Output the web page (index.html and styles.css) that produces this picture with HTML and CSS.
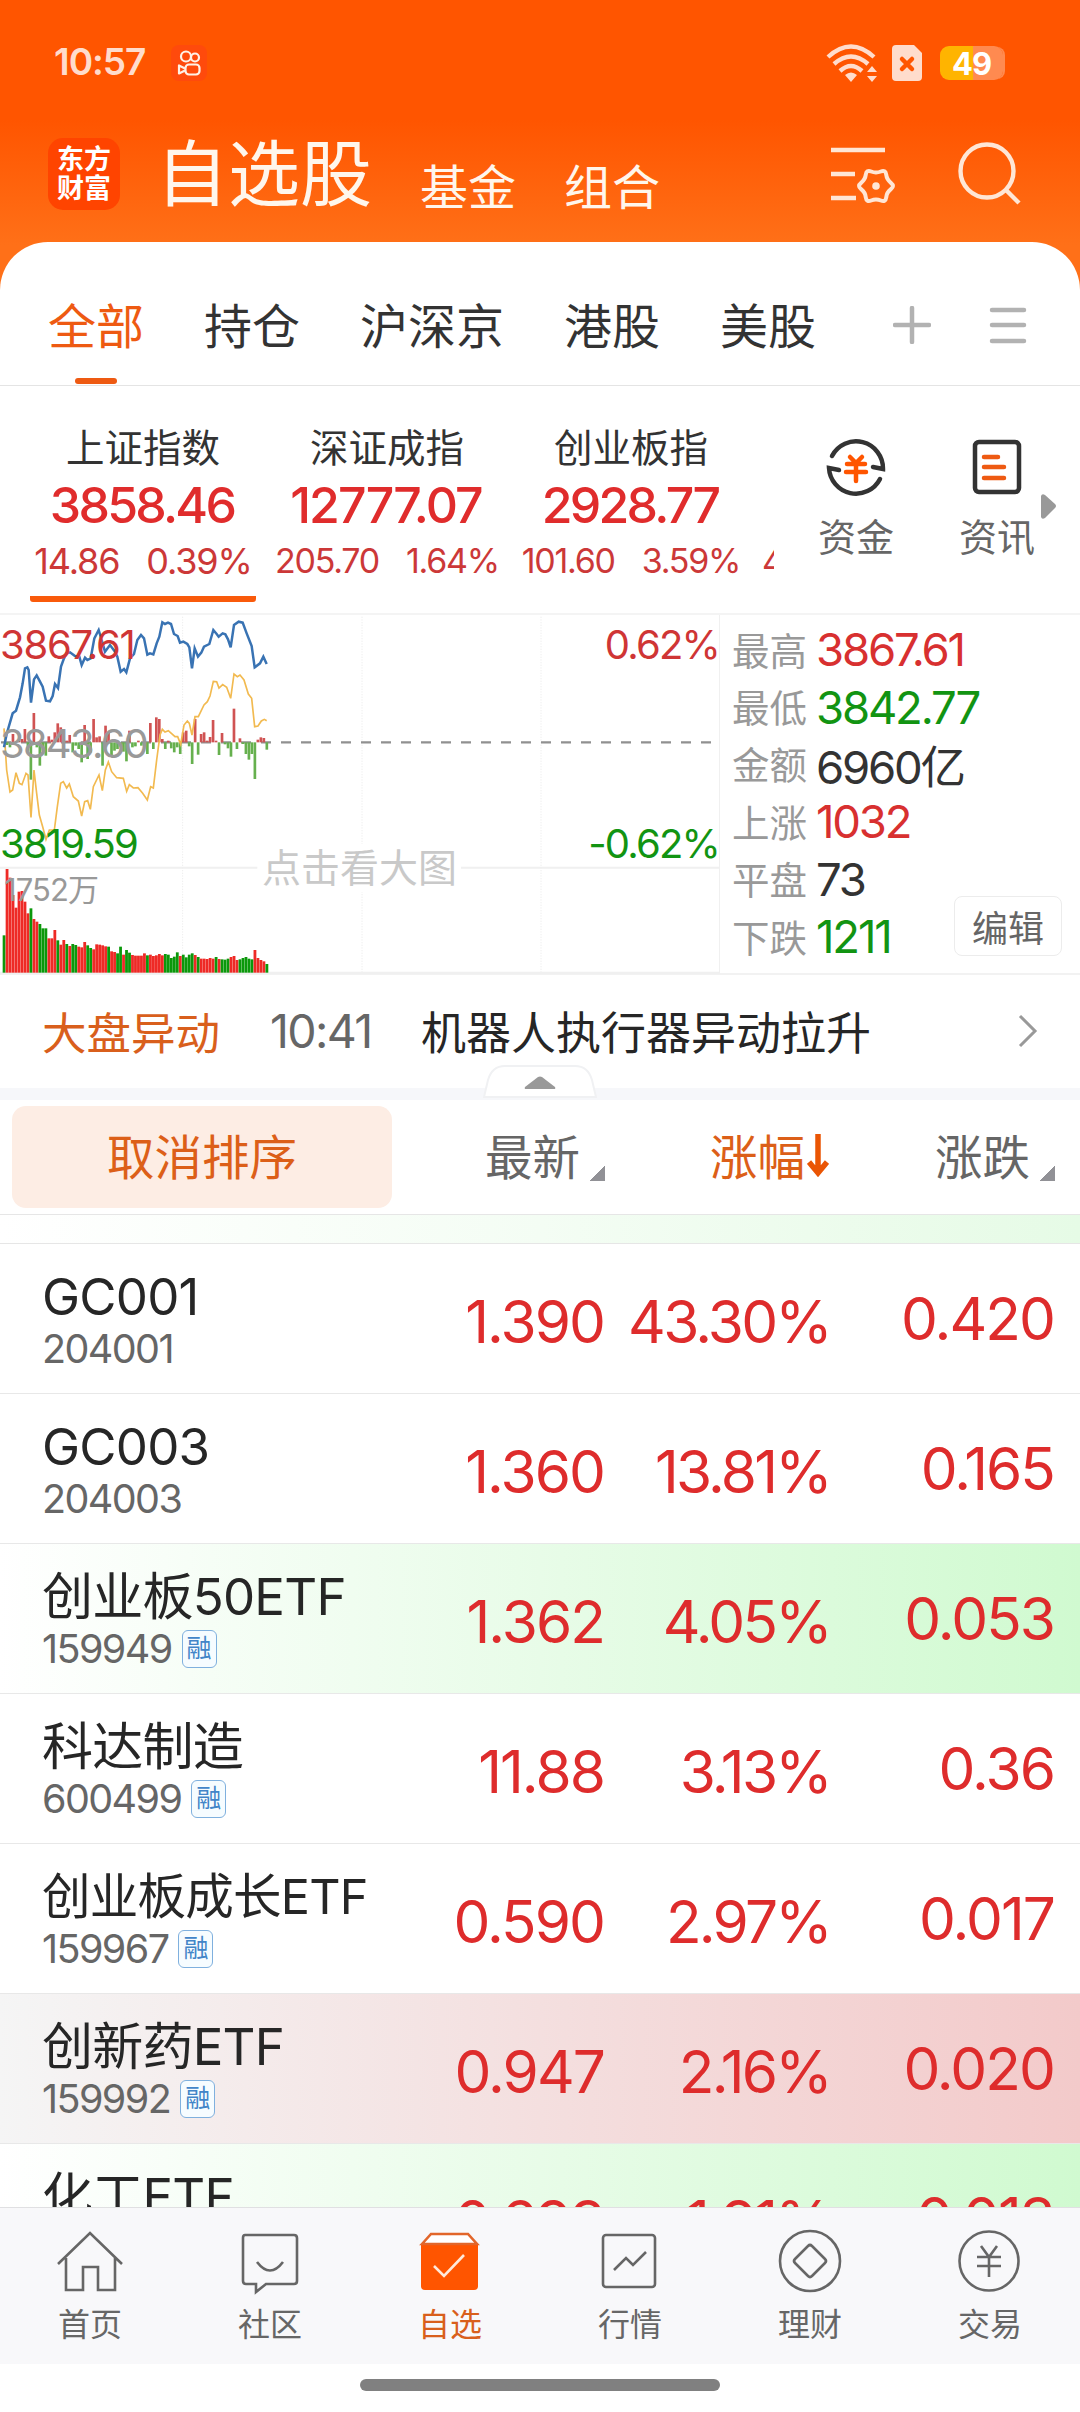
FILE: index.html
```html
<!DOCTYPE html>
<html lang="zh-CN">
<head>
    <meta charset="UTF-8">
    <meta name="viewport" content="width=device-width, initial-scale=1.0">
    <title>自选股</title>
    <link rel="stylesheet" href="styles.css">
</head>
<body>

<div class="header">
    <!-- Status bar -->
    <div class="status">
        <span class="time">10:57</span>
        <svg class="app-dot" viewBox="0 0 36 36">
            <rect width="36" height="36" rx="8" fill="#ff4a0c"/>
            <g fill="none" stroke="#fff1e6" stroke-width="2.2">
                <circle cx="15" cy="11.5" r="5"/><circle cx="24" cy="12.5" r="4"/>
                <rect x="14.5" y="19.5" width="14" height="10" rx="3.5"/>
                <path d="M14 23.5L8 20.5v8l6-3" stroke-linejoin="round"/>
            </g>
        </svg>
        <div class="status-right">
            <svg width="52" height="38" viewBox="0 0 52 38">
                <g fill="none" stroke="#ffdccc" stroke-width="4.4">
                    <path d="M2 13Q25-8 48 13"/><path d="M8 20Q25 5 42 20"/><path d="M14 27Q25 17 36 27"/>
                </g>
                <path d="M19 31q6-5 12 0l-6 7zM41 28l5-6 5 6zM41 32l5 6 5-6z" fill="#ffdccc"/>
            </svg>
            <svg class="sim" width="30" height="36" viewBox="0 0 30 36">
                <path d="M4 0h18l8 8v24q0 4-4 4H4q-4 0-4-4V4q0-4 4-4z" fill="#ffdccc"/>
                <path d="M10 14l10 10M20 14L10 24" stroke="#ff5500" stroke-width="4.5" stroke-linecap="round"/>
            </svg>
            <div class="battery">49</div>
        </div>
    </div>

    <!-- Title bar -->
    <div class="titlebar">
        <div class="logo">东方<br>财富</div>
        <div class="titles">
            <span class="title">自选股</span>
            <span class="subtitle">基金</span>
            <span class="subtitle">组合</span>
        </div>
        <svg class="list-icon" viewBox="0 0 64 60" fill="none" stroke="#ffe6d5" stroke-width="4.5">
            <path d="M0 4h54M0 28h24M0 52h25"/>
            <path d="M59.9 43.2Q55.8 46.3 55.2 51.4Q54.5 56.5 49.8 54.5Q45 52.5 40.2 54.5Q35.5 56.5 34.8 51.4Q34.2 46.3 30.1 43.2Q26 40 30.1 36.8Q34.2 33.7 34.8 28.6Q35.5 23.5 40.2 25.5Q45 27.5 49.8 25.5Q54.5 23.5 55.2 28.6Q55.8 33.7 59.9 36.8Q64 40 59.9 43.2z" stroke-width="4"/>
            <circle cx="45" cy="40" r="3.8" fill="#ffe6d5" stroke="none"/>
        </svg>
        <svg class="search-icon" viewBox="0 0 64 64" fill="none" stroke="#ffe6d5" stroke-width="4.4">
            <circle cx="29" cy="30" r="26.5"/><path d="M48 49L61 62"/>
        </svg>
    </div>
</div>

<div class="panel">
    <!-- Group tabs -->
    <div class="tabs">
        <span class="tab active">全部</span>
        <span class="tab">持仓</span>
        <span class="tab">沪深京</span>
        <span class="tab">港股</span>
        <span class="tab">美股</span>
        <svg class="plus" viewBox="0 0 38 38"><path d="M19 2v34M2 19h34"/></svg>
        <svg class="menu" viewBox="0 0 38 38"><path d="M3 4h32M3 19h32M3 35h32"/></svg>
    </div>

    <!-- Index cards -->
    <div class="indices">
        <div class="index-list">
            <div class="index selected">
                <div class="index-name">上证指数</div>
                <div class="index-value">3858.46</div>
                <div class="index-sub big"><span>14.86</span><span>0.39%</span></div>
            </div>
            <div class="index">
                <div class="index-name">深证成指</div>
                <div class="index-value wide">12777.07</div>
                <div class="index-sub"><span>205.70</span><span>1.64%</span></div>
            </div>
            <div class="index">
                <div class="index-name">创业板指</div>
                <div class="index-value">2928.77</div>
                <div class="index-sub"><span>101.60</span><span>3.59%</span></div>
            </div>
            <div class="index next">
                <div class="index-sub"><span>4</span></div>
            </div>
        </div>
        <div class="action">
            <svg width="60" height="62" viewBox="0 0 60 62" fill="none" stroke="#333" stroke-width="4.5" stroke-linecap="round">
                <path d="M6 20A27 27 0 0 1 57 33L47 31"/>
                <path d="M54 43A27 27 0 0 1 3 32L13 34"/>
                <path d="M24 21l6 6 6-6M21 28h18M20 36h20M30 27v18" stroke="#ff5500"/>
            </svg>
            <span>资金</span>
        </div>
        <div class="action news">
            <svg width="60" height="62" viewBox="0 0 60 62" fill="none" stroke="#333" stroke-width="4.5" stroke-linecap="round">
                <rect x="8" y="6" width="44" height="50" rx="4"/>
                <path d="M17 21h14M17 31h20M17 42h20" stroke="#ee5a12"/>
            </svg>
            <span>资讯</span>
        </div>
        <svg class="more-arrow" viewBox="0 0 15 25"><path d="M0 2q1-3 4-1l10 9q2 2 0 4L4 24q-3 2-4-1z" fill="#999"/></svg>
    </div>

    <!-- Intraday chart -->
    <div class="market">
        <div class="chart">
            <svg id="chart" viewBox="0 15 2160 1077"></svg>
            <span class="label high">3867.61</span>
            <span class="label mid">3843.60</span>
            <span class="label low">3819.59</span>
            <span class="label volume">1752万</span>
            <span class="label pct-up">0.62%</span>
            <span class="label pct-down">-0.62%</span>
            <span class="hint">点击看大图</span>
        </div>
        <div class="stats">
            <div class="stat"><label>最高</label><span class="red">3867.61</span></div>
            <div class="stat"><label>最低</label><span class="green">3842.77</span></div>
            <div class="stat"><label>金额</label><span>6960亿</span></div>
            <div class="stat"><label>上涨</label><span class="red">1032</span></div>
            <div class="stat"><label>平盘</label><span>73</span></div>
            <div class="stat"><label>下跌</label><span class="green">1211</span></div>
            <button class="edit">编辑</button>
        </div>
    </div>

    <!-- News ticker -->
    <div class="ticker">
        <span class="ticker-tag">大盘异动</span>
        <span class="ticker-time">10:41</span>
        <span class="ticker-text">机器人执行器异动拉升</span>
        <svg class="chevron" viewBox="0 0 20 36"><path d="M2 3l15 15L2 33" fill="none" stroke="#999" stroke-width="3"/></svg>
    </div>
    <div class="divider">
        <svg class="collapse" viewBox="0 0 114 34">
            <path d="M1 32L5 15Q9 1 22 1h70q13 0 17 14l4 17z" fill="#fff" stroke="#f0f1f3" stroke-width="2"/>
            <path d="M42 22l13-10q2-1 4 0l13 10q1 2-1 2H43q-2 0-1-2z" fill="#999"/>
        </svg>
    </div>

    <!-- Table header -->
    <div class="thead">
        <button class="cancel-sort">取消排序</button>
        <div class="th">最新<i class="corner"></i></div>
        <div class="th sorted">涨幅<svg width="22" height="44" viewBox="0 0 22 44"><path d="M11 0v38M2 28l9 11 9-11" fill="none" stroke="#ea5504" stroke-width="5.5"/></svg></div>
        <div class="th">涨跌<i class="corner"></i></div>
    </div>

    <!-- Stock list -->
    <div class="list">
        <div class="sliver"></div>
        <div class="row">
            <div class="stock"><div class="name">GC001</div><div class="code">204001</div></div>
            <div class="num">1.390</div><div class="num pct">43.30%</div><div class="num last">0.420</div>
        </div>
        <div class="row">
            <div class="stock"><div class="name">GC003</div><div class="code">204003</div></div>
            <div class="num">1.360</div><div class="num pct">13.81%</div><div class="num last">0.165</div>
        </div>
        <div class="row falling">
            <div class="stock"><div class="name">创业板50ETF</div><div class="code">159949<b class="tag">融</b></div></div>
            <div class="num">1.362</div><div class="num pct">4.05%</div><div class="num last">0.053</div>
        </div>
        <div class="row">
            <div class="stock"><div class="name">科达制造</div><div class="code">600499<b class="tag">融</b></div></div>
            <div class="num">11.88</div><div class="num pct">3.13%</div><div class="num last">0.36</div>
        </div>
        <div class="row">
            <div class="stock"><div class="name long">创业板成长ETF</div><div class="code">159967<b class="tag">融</b></div></div>
            <div class="num">0.590</div><div class="num pct">2.97%</div><div class="num last">0.017</div>
        </div>
        <div class="row rising">
            <div class="stock"><div class="name">创新药ETF</div><div class="code">159992<b class="tag">融</b></div></div>
            <div class="num">0.947</div><div class="num pct">2.16%</div><div class="num last">0.020</div>
        </div>
        <div class="row falling">
            <div class="stock"><div class="name">化工ETF</div><div class="code">159870<b class="tag">融</b></div></div>
            <div class="num">0.693</div><div class="num pct">1.91%</div><div class="num last">0.013</div>
        </div>
    </div>
</div>

<!-- Bottom navigation -->
<div class="nav">
    <div class="nav-item">
        <svg viewBox="0 0 66 66"><path d="M1 35L33 4l32 31M9 29v32h17V38h15v23h17V29"/></svg>
        <span>首页</span>
    </div>
    <div class="nav-item">
        <svg viewBox="0 0 66 66"><path d="M8 6h49q3 0 3 3v43q0 3-3 3H29l-10 8v-8H9q-3 0-3-3V9q0-3 2-3z"/><path d="M20 33q13 17 26 0"/></svg>
        <span>社区</span>
    </div>
    <div class="nav-item current">
        <svg viewBox="0 0 66 66">
            <path d="M4 15v42q0 4 4 4h49q4 0 4-4V15z" fill="#ff5500" stroke="none"/>
            <path d="M5 15l9-10h37l9 10z" fill="#fff" stroke="#e2662a"/>
            <path d="M17 37l10 10 20-21" stroke="#ffe9da"/>
        </svg>
        <span>自选</span>
    </div>
    <div class="nav-item">
        <svg viewBox="0 0 66 66"><rect x="6" y="6" width="52" height="52" rx="3"/><path d="M17 41l12-12 7 7 13-13"/></svg>
        <span>行情</span>
    </div>
    <div class="nav-item">
        <svg viewBox="0 0 66 66"><circle cx="33" cy="32" r="30"/><path d="M31 17q2-2 4 0l13 13q2 2 0 4L35 47q-2 2-4 0L18 34q-2-2 0-4z"/></svg>
        <span>理财</span>
    </div>
    <div class="nav-item">
        <svg viewBox="0 0 66 66"><circle cx="32" cy="32" r="29.5"/><path d="M24 17l8 11 8-11M20 28h24M20 37h24M32 28v20"/></svg>
        <span>交易</span>
    </div>
</div>
<div class="gesture"><div class="gesture-bar"></div></div>

<script src="chart.js"></script>
</body>
</html>
```

FILE: styles.css
```css
* {
    box-sizing: border-box;
}

body {
    margin: 0;
    width: 1080px;
    height: 2412px;
    overflow: hidden;
    display: flex;
    flex-direction: column;
    background-color: #fff;
    font-family: Inter, "Noto Sans CJK SC", sans-serif;
    font-weight: 400;
    color: #333;
}

svg {
    display: block;
    flex: none;
}

/* Orange header */
.header {
    height: 290px;
    flex: none;
    background: linear-gradient(#ff5500 120px, #ff7018 245px);
}

.status {
    display: flex;
    align-items: center;
    height: 125px;
    padding: 0 74px 0 54px;
}

.time {
    width: 117px;
    font-size: 37px;
    font-weight: 600;
    letter-spacing: -1px;
    line-height: 40px;
    padding-bottom: 2px;
    color: #ffdccc;
}

.app-dot {
    width: 36px;
    height: 36px;
}

.status-right {
    display: flex;
    align-items: center;
    margin-left: auto;
}

.sim {
    margin: 0 18px 0 14px;
}

.battery {
    width: 63px;
    height: 34px;
    margin-right: 3px;
    border-radius: 9px;
    background: linear-gradient(90deg, #ffb400 52%, #ff8a50 52%);
    box-shadow: 3px 0 0 -1px #ff8a50;
    color: #fff;
    font-size: 31px;
    font-weight: 700;
    letter-spacing: -1px;
    line-height: 35px;
    text-align: center;
}

.titlebar {
    display: flex;
    height: 116px;
    padding: 13px 58px 0 48px;
}

.logo {
    width: 72px;
    height: 72px;
    padding-top: 7px;
    border-radius: 15px;
    background-color: #ff4400;
    color: #fff;
    font-size: 27px;
    font-weight: 700;
    line-height: 29px;
    text-align: center;
}

.titles {
    display: flex;
    margin-left: 36px;
    color: #fff6ec;
    line-height: 72px;
}

.title {
    font-size: 72px;
    margin-right: 48px;
}

.subtitle {
    padding-top: 14px;
    font-size: 48px;
    margin-right: 48px;
}

.list-icon {
    width: 64px;
    height: 60px;
    margin: 8px 0 0 auto;
}

.search-icon {
    width: 64px;
    height: 64px;
    margin: 3px 0 0 63px;
}

/* White panel */
.panel {
    position: relative;
    display: flex;
    flex-direction: column;
    flex: 1;
    min-height: 0;
    margin-top: -48px;
    border-radius: 48px 48px 0 0;
    background-color: #fff;
}

.tabs {
    display: flex;
    align-items: center;
    height: 144px;
    flex: none;
    padding: 27px 53px 0 48px;
    border-bottom: 1px solid #e4e4e4;
}

.tab {
    position: relative;
    margin-right: 60px;
    font-size: 48px;
    line-height: 60px;
}

.tab.active {
    color: #ee5a12;
}

.tab.active::after {
    content: "";
    position: absolute;
    left: 27px;
    bottom: -27px;
    width: 42px;
    height: 6px;
    border-radius: 3px;
    background-color: #ee5a12;
}

.plus,
.menu {
    width: 38px;
    height: 38px;
    margin-bottom: 4px;
    fill: none;
    stroke: #b2b2b2;
    stroke-width: 4.5;
    stroke-linecap: round;
}

.plus {
    margin-left: 17px;
}

.menu {
    margin-left: auto;
}

/* Index cards */
.indices {
    position: relative;
    display: flex;
    height: 229px;
    flex: none;
    border-bottom: 2px solid #f4f4f4;
}

.index-list {
    display: flex;
    gap: 18px;
    width: 774px;
    padding-left: 30px;
    overflow: hidden;
}

.index {
    display: flex;
    flex-direction: column;
    align-items: center;
    width: 226px;
    flex: none;
    height: 216px;
    padding-top: 37px;
}

.index.selected {
    border-bottom: 6px solid #f95a0b;
    border-radius: 3px;
}

.index.next {
    align-items: flex-start;
    padding-top: 150px;
}

.index-name {
    font-size: 38.5px;
    line-height: 50px;
}

.index-value {
    margin: 2px 2px 0 0;
    font-size: 50px;
    font-weight: 500;
    letter-spacing: -0.055em;
    line-height: 60px;
    color: #e02c2c;
}

.index-value.wide {
    letter-spacing: -0.038em;
}

.index-sub {
    display: flex;
    gap: 27px;
    margin-top: 1px;
    font-size: 34px;
    letter-spacing: -0.037em;
    line-height: 50px;
    color: #cc3838;
}

.index-sub.big {
    font-size: 36px;
    letter-spacing: -0.032em;
}

.action {
    display: flex;
    flex-direction: column;
    align-items: center;
    width: 140px;
    margin-left: 12px;
    padding-top: 50px;
    font-size: 38px;
    line-height: 50px;
    color: #666;
}

.action span {
    margin-top: 14px;
}

.news {
    margin-left: 1px;
}

.more-arrow {
    position: absolute;
    left: 1041px;
    top: 108px;
    width: 15px;
    height: 25px;
}

/* Chart and stats */
.market {
    display: flex;
    height: 358px;
    flex: none;
}

.chart {
    position: relative;
    width: 720px;
}

.chart svg {
    width: 720px;
    height: 359px;
}

.label,
.hint {
    position: absolute;
    font-size: 40px;
    letter-spacing: -0.045em;
    line-height: 48px;
}

.high {
    left: 0;
    top: 6px;
    letter-spacing: -0.032em;
    color: #cf3535;
}

.mid {
    left: 0;
    top: 105px;
    color: #999;
}

.low {
    left: 0;
    top: 205px;
    color: #129412;
}

.volume {
    left: 4px;
    top: 251px;
    font-size: 31px;
    letter-spacing: -0.03em;
    color: #999;
}

.pct-up {
    right: 1px;
    top: 6px;
    color: #cf3535;
}

.pct-down {
    right: 1px;
    top: 205px;
    color: #129412;
}

.hint {
    left: 258px;
    top: 229px;
    padding: 0 4px;
    background-color: #fff;
    font-size: 39px;
    letter-spacing: 0;
    color: #c9c9c9;
}

.stats {
    position: relative;
    flex: 1;
    padding: 6px 0 0 12px;
}

.stat {
    display: flex;
    align-items: center;
    height: 57.4px;
}

.stat label {
    width: 84px;
    padding-bottom: 3px;
    font-size: 37.5px;
    color: #999;
}

.stat span {
    font-size: 45.5px;
    letter-spacing: -0.048em;
}

.red {
    color: #d83030;
}

.green {
    color: #129412;
}

.edit {
    position: absolute;
    left: 234px;
    top: 281px;
    width: 108px;
    height: 60px;
    padding: 0;
    border: 1px solid #ececec;
    border-radius: 8px;
    background-color: #fff;
    font-family: inherit;
    font-size: 36px;
    color: #666;
}

/* News ticker */
.ticker {
    display: flex;
    align-items: center;
    height: 115px;
    flex: none;
    padding: 0 42px 2px 42px;
    border-top: 2px solid #f2f2f2;
}

.ticker-tag {
    width: 228px;
    font-size: 44.5px;
    color: #d95f1c;
}

.ticker-time {
    width: 151px;
    font-size: 46.5px;
    letter-spacing: -0.035em;
    color: #666;
}

.ticker-text {
    font-size: 45px;
    color: #262626;
}

.chevron {
    width: 20px;
    height: 36px;
    margin-left: auto;
}

.divider {
    position: relative;
    height: 12px;
    flex: none;
    background-color: #f6f7fa;
}

.collapse {
    position: absolute;
    left: 483px;
    top: -23px;
    width: 114px;
    height: 34px;
}

/* Table */
.thead,
.row {
    display: grid;
    grid-template-columns: 392px 213px 223px 227px;
    flex: none;
}

.thead {
    height: 115px;
    padding: 6px 0;
    border-bottom: 1px solid #e6e6e6;
}

.cancel-sort {
    margin-left: 12px;
    padding: 0 0 6px;
    border: none;
    border-radius: 14px;
    background-color: #fdede4;
    font-family: inherit;
    font-size: 47.5px;
    color: #dc5f18;
}

.th {
    display: flex;
    align-items: center;
    justify-content: flex-end;
    padding-bottom: 6px;
    font-size: 47.5px;
    color: #666;
}

.corner {
    width: 15px;
    height: 15px;
    margin: 39px 0 0 10px;
    background: linear-gradient(135deg, transparent 50%, #919196 50%);
}

.sorted {
    color: #dc5f18;
}

.sorted svg {
    margin-right: -1px;
    margin-left: 2px;
    margin-top: 4px;
}

.list {
    flex: 1;
    min-height: 0;
    overflow: hidden;
}

.sliver {
    height: 29px;
    border-bottom: 1px solid #e6e6e6;
    background: linear-gradient(90deg, #fff, #f4fdf4 50%, #e6fbe6);
}

.row {
    height: 150px;
    border-bottom: 1px solid #e8e8e8;
}

.row.falling {
    background: linear-gradient(90deg, #fff, #e8fce8 50%, #d0fad0);
}

.row.rising {
    background: linear-gradient(90deg, #f5f5f5, #f4dfdf 50%, #f3caca);
}

.stock {
    padding: 22px 0 0 42px;
    white-space: nowrap;
}

.name {
    font-size: 51px;
    letter-spacing: -0.015em;
    line-height: 62px;
    color: #262626;
}

.name.long {
    font-size: 48.5px;
}

.code {
    display: flex;
    align-items: center;
    height: 44px;
    margin-top: -1px;
    font-size: 39.5px;
    letter-spacing: -0.04em;
    color: #666;
}

.tag {
    width: 35px;
    height: 38px;
    margin-left: 10px;
    border: 1.5px solid #7fb0de;
    border-radius: 6px;
    background-color: #f6fcff;
    font-size: 25px;
    font-weight: 400;
    letter-spacing: 0;
    line-height: 34px;
    text-align: center;
    color: #4285c8;
}

.num {
    padding: 42px 1px 0 0;
    font-size: 58.5px;
    letter-spacing: -0.033em;
    line-height: 72px;
    text-align: right;
    color: #de2c2c;
}

.num.pct {
    margin-right: -3px;
    letter-spacing: -0.047em;
}

.num.last {
    padding-top: 39px;
}

/* Bottom navigation */
.nav {
    display: flex;
    height: 157px;
    flex: none;
    border-top: 1px solid #e0e0e2;
    background-color: #f8f8fa;
}

.nav-item {
    display: flex;
    flex-direction: column;
    align-items: center;
    width: 180px;
    padding-top: 21px;
    font-size: 32px;
    line-height: 40px;
    color: #666;
}

.nav-item svg {
    width: 66px;
    height: 66px;
    margin-bottom: 10px;
    fill: none;
    stroke: #666;
    stroke-width: 2.6;
}

.nav-item.current {
    color: #d95f1c;
}

.gesture {
    height: 48px;
    flex: none;
    padding-top: 15px;
}

.gesture-bar {
    width: 360px;
    height: 12px;
    margin: 0 auto;
    border-radius: 6px;
    background-color: #808080;
}
```

FILE: chart.js
```js
const chart = document.getElementById('chart');

const indexLine = '12,412 20,372 38,310 48,302 60,262 68,220 75,175 82,172 86,180 93,278 102,208 110,196 120,215 128,230 138,272 150,274 158,258 165,222 174,234 183,170 192,145 200,130 210,127 225,138 238,140 245,165 255,143 262,150 272,145 283,85 296,60 305,90 315,125 330,105 345,125 352,140 362,185 372,177 379,187 390,145 402,132 412,90 423,75 432,85 442,134 450,130 460,133 470,100 478,80 487,37 495,42 504,38 513,42 522,72 533,78 540,98 550,95 562,102 568,112 576,175 584,115 594,140 604,128 612,110 628,102 640,60 650,72 656,80 668,70 676,73 684,88 692,112 702,45 716,35 728,38 740,70 755,108 764,172 780,160 790,140 800,162';
const averageLine = '12,355 20,480 30,546 38,540 48,488 58,520 66,524 78,490 84,495 93,622 102,480 110,550 118,615 128,650 138,688 148,660 163,660 172,590 182,520 190,515 200,534 208,522 220,560 235,573 245,618 254,575 263,572 271,598 280,530 297,495 307,542 316,480 325,456 335,485 350,503 370,505 380,544 388,524 400,534 414,533 428,550 442,570 452,530 460,534 470,450 480,375 487,358 495,366 505,362 525,380 533,380 542,403 552,345 562,333 568,340 576,375 585,320 595,320 612,285 622,275 630,258 640,214 650,215 657,234 668,224 680,232 692,265 702,192 712,200 720,195 732,210 745,252 755,265 764,350 774,348 784,333 793,328 800,332';

// one value per minute, above or below the zero line
const momentum = [
    0, -8, -15, 25, 0, 5, 10, 40, -25, -112, 88, -15, -70, -25, -40, 18, 8, 30, 57, 45,
    8, 5, 22, -30, -10, -20, -60, 52, -50, -30, 70, 15, 18, -70, 50, 30, -40, -25, -20, -12,
    -28, -57, 35, -15, -12, 5, -10, -12, -35, 58, -20, 75, 70, 10, -20, 5, -18, -30, -15, -35,
    30, 35, -12, -65, 70, -37, 25, 30, 5, 16, 67, 5, -38, 28, -6, -18, -43, 101, -20, 12,
    -5, -35, -52, -35, -110, 8, 15, 13, -22
];

const volume = [
    112, 311, 285, 233, 195, 243, 245, 213, 178, 193, 161, 153, 146, 133, 133, 103, 103, 128, 97, 84,
    98, 86, 80, 86, 83, 78, 76, 92, 82, 74, 70, 85, 84, 82, 79, 78, 64, 62, 58, 78,
    54, 68, 60, 53, 51, 51, 51, 58, 52, 54, 50, 52, 56, 52, 56, 54, 44, 48, 61, 50,
    54, 46, 54, 58, 53, 47, 42, 42, 41, 44, 42, 47, 41, 40, 39, 42, 47, 50, 38, 40,
    44, 47, 42, 40, 68, 44, 38, 34, 26
];
const colors = 'grrrrrrrrgrrgggrrrgrrgrggrrrggrrrrrgrrggrggrrrrrgrrrrrgggggrggggrgrrrrrgrgggrrrgggggrrrrg';

let svg = '';
// grid
svg += '<path d="M0 773H772M1383 773H2160M0 1088H2160M2160 15V1088" stroke="#f0f0f0" stroke-width="6"/>';
svg += '<path d="M548 20V1086M1086 20V1086M1623 20V1086" stroke="#eee" stroke-width="3" stroke-dasharray="4 4"/>';
svg += '<path d="M3 397H2135" stroke="#909090" stroke-width="7" stroke-dasharray="30 30"/>';

momentum.forEach((v, i) => {
    const x = 8 + i * 8.96;
    const y = v > 0 ? 397 - v : 397;
    svg += `<rect x="${x}" y="${y}" width="8" height="${Math.abs(v)}" fill="${v > 0 ? '#d05353' : '#66b04e'}"/>`;
});
for (let i = 0; i < volume.length; i++) {
    const x = 8 + i * 8.96;
    svg += `<rect x="${x}" y="${1088 - volume[i]}" width="8.4" height="${volume[i]}" fill="${colors[i] === 'r' ? '#ee2a26' : '#0b980b'}"/>`;
}
svg += `<polyline points="${averageLine}" fill="none" stroke="#f2ba50" stroke-width="5"/>`;
svg += `<polyline points="${indexLine}" fill="none" stroke="#3973b3" stroke-width="7.5"/>`;
chart.innerHTML = svg;
```
